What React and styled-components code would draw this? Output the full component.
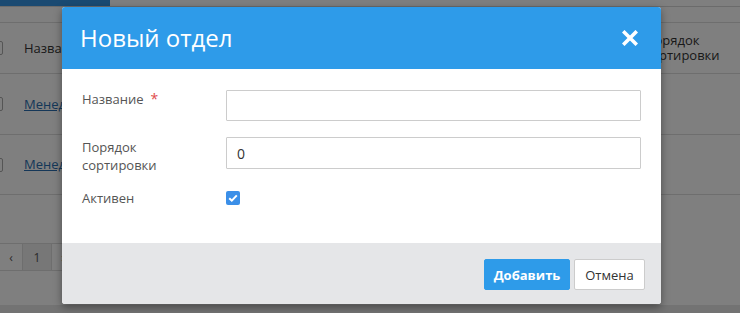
import React from "react";
import styled, { createGlobalStyle } from "styled-components";

const Global = createGlobalStyle`
  html, body { margin: 0; padding: 0; background: #fff; }
  body { font-family: "Open Sans", "Liberation Sans", sans-serif; overflow: hidden; }
  * { box-sizing: border-box; }
`;

const Page = styled.div`
  width: 740px;
  height: 313px;
  position: relative;
  overflow: hidden;
  background: #fff;
  color: #333;
  font-size: 13px;
`;

const TabBar = styled.div`
  height: 7px;
  border-bottom: 1px solid #d6d6d6;
  display: flex;
`;

const Tab = styled.div`
  width: 110px;
  background: ${(p) => (p.$active ? "#3594e4" : "transparent")};
`;

const Toolbar = styled.div`
  height: 16px;
  border-bottom: 1px solid #ddd;
`;

const Table = styled.div`
  margin-left: -11px;
`;

const Row = styled.div`
  display: grid;
  grid-template-columns: 35px 1fr 95px;
  align-items: center;
  height: ${(p) => p.$h}px;
  border-bottom: 1px solid #ddd;
`;

const Cell = styled.div`
  line-height: 15px;
  color: #333;
`;

const Check = styled.div`
  width: 14px;
  height: 14px;
  border: 1px solid #aaa;
  border-radius: 2px;
  background: #fff;
`;

const Link = styled.a`
  color: #2a6fb0;
  text-decoration: underline;
`;

const Gap = styled.div`
  height: 48px;
`;

const Pager = styled.div`
  display: flex;
  height: 28px;
`;

const PageBtn = styled.div`
  width: ${(p) => p.$w}px;
  display: flex;
  align-items: center;
  justify-content: center;
  border: 1px solid #ddd;
  margin-left: -1px;
  background: ${(p) => (p.$active ? "#eee" : "#fff")};
  color: #555;
  font-size: 12px;
`;

const BottomBar = styled.div`
  margin-top: 34px;
  height: 20px;
  background: #e6e6e6;
`;

const Overlay = styled.div`
  position: absolute;
  inset: 0;
  background: rgba(0, 0, 0, 0.5);
`;

const Modal = styled.div`
  position: absolute;
  left: 62px;
  top: 7px;
  width: 599px;
  height: 297px;
  background: #fff;
  border-radius: 3px;
  overflow: hidden;
  box-shadow: 0 3px 9px rgba(0, 0, 0, 0.4);
  display: flex;
  flex-direction: column;
`;

const Header = styled.div`
  height: 62px;
  background: #2e9be9;
  display: flex;
  align-items: center;
  justify-content: space-between;
  padding: 0 23px 0 18px;
`;

const Title = styled.h4`
  margin: 0;
  color: #fff;
  font-size: 24px;
  font-weight: 400;
  line-height: 30px;
`;

const Close = styled.button`
  border: 0;
  background: none;
  padding: 0;
  width: 16px;
  height: 16px;
  display: flex;
  cursor: pointer;
`;

const Body = styled.div`
  flex: 1;
  padding: 21px 20px 0 20px;
`;

const FormRow = styled.div`
  display: grid;
  grid-template-columns: 144px 1fr;
  align-items: start;
  margin-bottom: ${(p) => p.$mb}px;
`;

const Label = styled.label`
  font-size: 13px;
  line-height: 18px;
  color: #555;
  padding-top: ${(p) => p.$pt || 0}px;
`;

const Req = styled.span`
  color: #e04b4b;
  margin-left: 7px;
  font-size: 14px;
`;

const Input = styled.input`
  width: 100%;
  height: ${(p) => p.$h}px;
  border: 1px solid #ccc;
  border-radius: 1px;
  padding: 0 10px;
  font-family: "Open Sans", "Liberation Sans", sans-serif;
  font-size: 14px;
  color: #333;
  outline: none;
`;

const CheckBox = styled.span`
  width: 14px;
  height: 14px;
  margin-top: 2px;
  border-radius: 2px;
  background: #3b8fe8;
  display: flex;
  align-items: center;
  justify-content: center;
`;

const Footer = styled.div`
  height: 61px;
  background: #e5e6e8;
  display: flex;
  justify-content: flex-end;
  align-items: flex-start;
  gap: 4px;
  padding: 16px 16px 0 0;
`;

const Button = styled.button`
  height: 31px;
  width: ${(p) => p.$w}px;
  border-radius: 2px;
  font-family: "Open Sans", "Liberation Sans", sans-serif;
  font-size: 13px;
  font-weight: ${(p) => (p.$primary ? 700 : 400)};
  color: ${(p) => (p.$primary ? "#fff" : "#333")};
  background: ${(p) => (p.$primary ? "#2e9be9" : "#fff")};
  border: 1px solid ${(p) => (p.$primary ? "#2e9be9" : "#ccc")};
  padding: 0;
  cursor: pointer;
`;

export default function App() {
  return (
    <>
      <Global />
      <Page>
        <TabBar>
          <Tab $active />
          <Tab />
        </TabBar>
        <Toolbar />
        <Table>
          <Row $h={51}>
            <Check />
            <Cell>Название</Cell>
            <Cell>
              Порядок
              <br />
              сортировки
            </Cell>
          </Row>
          <Row $h={61}>
            <Check />
            <Cell>
              <Link>Менеджеры</Link>
            </Cell>
            <Cell>0</Cell>
          </Row>
          <Row $h={60}>
            <Check />
            <Cell>
              <Link>Менеджеры</Link>
            </Cell>
            <Cell>0</Cell>
          </Row>
        </Table>
        <Gap />
        <Pager>
          <PageBtn $w={24}>‹</PageBtn>
          <PageBtn $w={30} $active>
            1
          </PageBtn>
          <PageBtn $w={24}>›</PageBtn>
        </Pager>
        <BottomBar />
        <Overlay />
        <Modal>
          <Header>
            <Title>Новый отдел</Title>
            <Close aria-label="Закрыть">
              <svg width="16" height="16" viewBox="0 0 16 16">
                <path
                  d="M2.5 2.5 L13.5 13.5 M13.5 2.5 L2.5 13.5"
                  stroke="#fff"
                  strokeWidth="3.6"
                  strokeLinecap="square"
                />
              </svg>
            </Close>
          </Header>
          <Body>
            <FormRow $mb={16}>
              <Label>
                Название<Req>*</Req>
              </Label>
              <Input $h={31} defaultValue="" />
            </FormRow>
            <FormRow $mb={15}>
              <Label $pt={1}>
                Порядок
                <br />
                сортировки
              </Label>
              <Input $h={32} defaultValue="0" />
            </FormRow>
            <FormRow $mb={0}>
              <Label>Активен</Label>
              <CheckBox>
                <svg width="10" height="8" viewBox="0 0 10 8">
                  <path
                    d="M1.2 4.2 L3.8 6.6 L8.8 1.4"
                    stroke="#fff"
                    strokeWidth="2"
                    fill="none"
                  />
                </svg>
              </CheckBox>
            </FormRow>
          </Body>
          <Footer>
            <Button $primary $w={86}>
              Добавить
            </Button>
            <Button $w={71}>Отмена</Button>
          </Footer>
        </Modal>
      </Page>
    </>
  );
}
